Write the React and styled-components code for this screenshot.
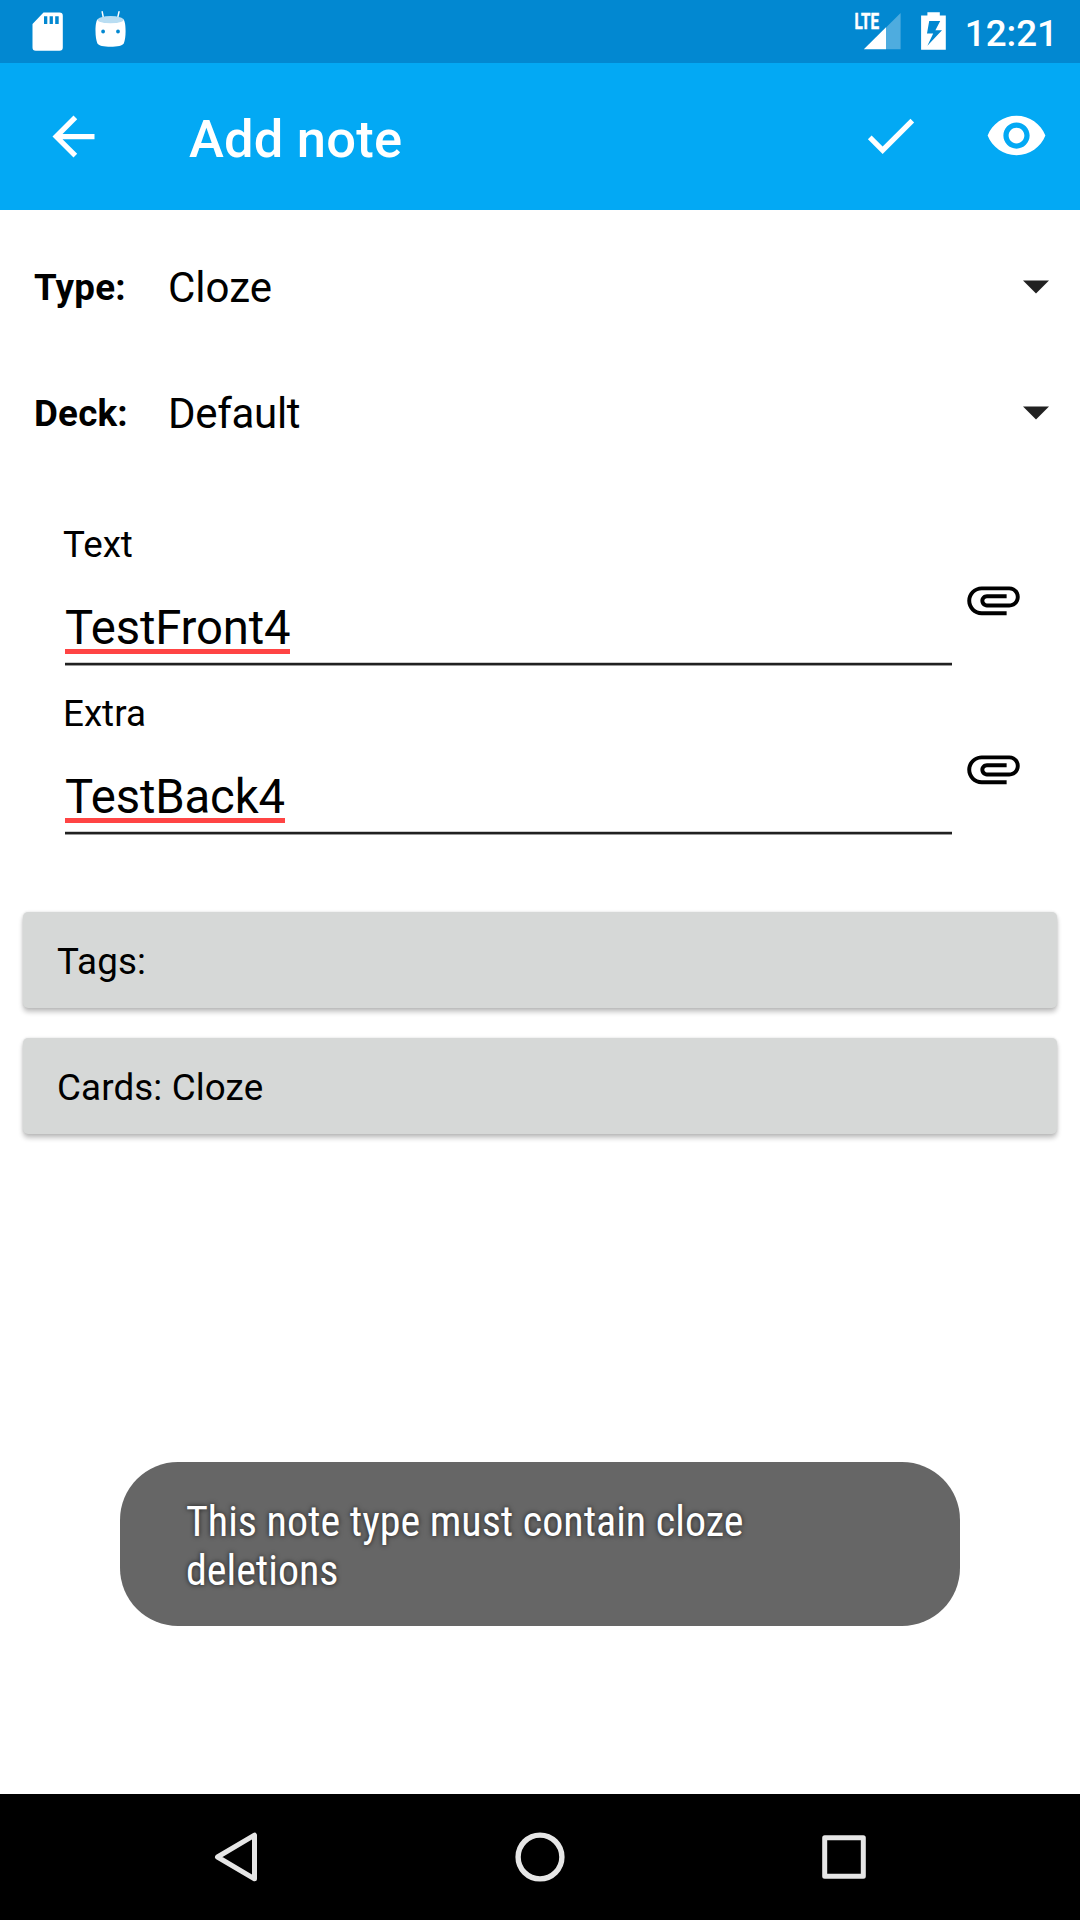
import React from 'react';
import styled, { createGlobalStyle } from 'styled-components';

const GlobalStyle = createGlobalStyle`
  *, *::before, *::after { box-sizing: border-box; }
  html, body { margin: 0; padding: 0; background: #fff; }
  body {
    font-family: Roboto, "Liberation Sans", sans-serif;
    color: #000;
    -webkit-font-smoothing: antialiased;
  }
  svg { display: block; flex: none; }
`;

const Screen = styled.div`
  width: 1080px;
  height: 1920px;
  display: flex;
  flex-direction: column;
  background: #fff;
  overflow: hidden;
`;

const StatusBar = styled.header`
  height: 63px;
  flex: none;
  display: flex;
  justify-content: space-between;
  background: #0288d1;
  color: #fff;
  padding: 0 22px 0 30px;
`;

const StatusGroup = styled.div`
  display: flex;
  align-items: flex-start;
  gap: ${({ $gap }) => $gap}px;
`;

const Clock = styled.time`
  font-size: 36.75px;
  font-weight: 500;
  line-height: 67px;
`;

const Toolbar = styled.div`
  height: 147px;
  flex: none;
  display: flex;
  align-items: center;
  background: #03a9f4;
  color: #fff;
  padding: 0 32px 0 42px;
`;

const Title = styled.h1`
  flex: 1;
  margin: 5px 0 0 84px;
  font-size: 52.5px;
  font-weight: 500;
  line-height: 62px;
  letter-spacing: 0.2px;
`;

const IconButton = styled.button`
  border: 0;
  padding: 0 0 ${({ $lift = 0 }) => $lift}px;
  margin: 0 0 0 ${({ $before = 0 }) => $before}px;
  background: none;
  color: inherit;
  display: flex;
`;

const Content = styled.main`
  flex: 1;
  min-height: 0;
  display: flex;
  flex-direction: column;
  padding-top: 14px;
`;

const SpinnerRow = styled.div`
  height: 126px;
  flex: none;
  display: flex;
  align-items: center;
  padding: 0 31.5px 0 34px;
`;

const SpinnerLabel = styled.span`
  width: 134px;
  padding-top: 1px;
  font-size: 36.75px;
  font-weight: 700;
  line-height: 43px;
  letter-spacing: 0.2px;
`;

const SpinnerValue = styled.span`
  flex: 1;
  padding-top: 1px;
  font-size: 42px;
  line-height: 49px;
  letter-spacing: ${({ $tracking = 0 }) => $tracking}px;
`;

const Fields = styled.section`
  flex: none;
  display: flex;
  flex-direction: column;
  padding: 46px 55px 0 63px;
`;

const Field = styled.div`
  height: 169px;
  display: flex;
  justify-content: space-between;
`;

const FieldBody = styled.div`
  width: 889px;
  display: flex;
  flex-direction: column;
`;

const FieldLabel = styled.label`
  font-size: 36.75px;
  line-height: 45px;
`;

const FieldValue = styled.div`
  height: 95px;
  margin-left: 2px;
  padding-top: 40px;
  display: flex;
  align-items: flex-start;
`;

const Misspelled = styled.span`
  font-size: 47.25px;
  line-height: 42px;
  letter-spacing: -0.15px;
  border-bottom: 5px solid #ff4444;
`;

const FieldLine = styled.div`
  height: 4px;
  margin-left: 2px;
  background: linear-gradient(#ccc 1px, #212121 1px, #212121 3px, #999 3px);
`;

const Attach = styled(IconButton)`
  align-self: flex-start;
  padding-top: 46px;
`;

const Actions = styled.section`
  flex: none;
  display: flex;
  flex-direction: column;
  gap: 30px;
  padding: 52px 23px 0;
`;

const ActionButton = styled.button`
  height: 96px;
  border: 0;
  border-radius: 5px;
  background: #d6d8d7;
  box-shadow: 0 4px 5px rgba(0, 0, 0, 0.24), 0 0 3px rgba(0, 0, 0, 0.12);
  color: #000;
  font: 400 36.75px/43px Roboto, "Liberation Sans", sans-serif;
  letter-spacing: 0.13px;
  text-align: left;
  padding: 3px 34px 0;
`;

const Toast = styled.div`
  width: 840px;
  height: 164px;
  flex: none;
  margin: auto auto 168px;
  border-radius: 58px;
  background: #666;
  color: #fff;
  padding: 35px 66px 0;
  font-family: "Roboto Condensed", Roboto, sans-serif;
  font-stretch: 75%;
  font-size: 42px;
  line-height: 49px;
  text-shadow: 0 0 5px rgba(0, 0, 0, 0.73);
`;

const NavBar = styled.nav`
  height: 126px;
  flex: none;
  display: flex;
  background: #000;
  color: #e6e6e6;
  padding: 0 84px;
`;

const NavButton = styled.button`
  flex: 1;
  border: 0;
  padding: 0;
  background: none;
  color: inherit;
  display: flex;
  align-items: center;
  justify-content: center;
`;

const MaterialIcon = ({ d, size = 63 }) => (
  <svg width={size} height={size} viewBox="0 0 24 24" fill="currentColor">
    <path d={d} />
  </svg>
);

const ICONS = {
  back: 'M20 11H7.83l5.59-5.59L12 4l-8 8 8 8 1.41-1.41L7.83 13H20v-2z',
  check: 'M9 16.2L4.8 12l-1.4 1.4L9 19 21 7l-1.4-1.4L9 16.2z',
  eye: 'M12 4.5C7 4.5 2.73 7.61 1 12c1.73 4.39 6 7.5 11 7.5s9.27-3.11 11-7.5c-1.73-4.39-6-7.5-11-7.5zM12 17c-2.76 0-5-2.24-5-5s2.24-5 5-5 5 2.24 5 5-2.24 5-5 5zm0-8c-1.66 0-3 1.34-3 3s1.34 3 3 3 3-1.34 3-3-1.34-3-3-3z',
  clip: 'M7.5 18C4.46 18 2 15.54 2 12.5S4.46 7 7.5 7H18c2.21 0 4 1.79 4 4s-1.79 4-4 4H9.5C8.12 15 7 13.88 7 12.5S8.12 10 9.5 10H17v1.5H9.5c-.55 0-1 .45-1 1s.45 1 1 1H18c1.38 0 2.5-1.12 2.5-2.5S19.38 8.5 18 8.5H7.5c-2.21 0-4 1.79-4 4s1.79 4 4 4H17V18H7.5z',
};

const SdCardIcon = () => (
  <svg width="36" height="63" viewBox="30 0 36 63">
    <path
      fill="#fff"
      fillRule="evenodd"
      d="M43.5 12.5H59.5a3.3 3.3 0 0 1 3.3 3.3V47.4a3.3 3.3 0 0 1-3.3 3.3H35.8a3.3 3.3 0 0 1-3.3-3.3V24zM44 16.3V24h3.3v-7.7zM49.6 16.3V24h3.3v-7.7zM55.2 16.3V24h3.5v-7.7z"
    />
  </svg>
);

const AndroidIcon = () => (
  <svg width="36" height="63" viewBox="93 0 36 63">
    <path d="M102.2 11.8l1.4 7M119 11.8l-1.6 7" stroke="#fff" strokeWidth="1.5" strokeLinecap="round" />
    <path
      fill="#fff"
      fillRule="evenodd"
      d="M97.6 19.3C100 24 121 24 123.4 19.3C125 21 125.6 26 125.6 31C125.6 36 125 40.5 123.9 43.2C123 45.6 117 46.7 110.6 46.7S98.2 45.6 97.3 43.2C96.2 40.5 95.5 36 95.5 31C95.5 26 96 21 97.6 19.3zM103.1 29.6a1.9 1.9 0 1 0 0 3.8a1.9 1.9 0 1 0 0-3.8zM118 29.6a1.9 1.9 0 1 0 0 3.8a1.9 1.9 0 1 0 0-3.8z"
    />
    <ellipse cx="110.6" cy="19.7" rx="13" ry="3.6" fill="#b9ddf2" />
  </svg>
);

const SignalIcon = () => (
  <svg width="50" height="63" viewBox="853 0 50 63">
    <path d="M886 27.5L900.6 13V49.3H886z" fill="#fff" fillOpacity="0.3" />
    <path d="M863.8 49.3L886 27.3V49.3z" fill="#fff" />
    <text
      x="854.5"
      y="29"
      fill="#fff"
      stroke="#fff"
      strokeWidth="0.5"
      fontFamily="Roboto, sans-serif"
      fontWeight="700"
      fontSize="21.5"
      textLength="24.5"
      lengthAdjust="spacingAndGlyphs"
    >
      LTE
    </text>
  </svg>
);

const BatteryIcon = () => (
  <svg width="29" height="63" viewBox="920 0 29 63">
    <path
      fill="#fff"
      fillRule="evenodd"
      d="M928.4 12.2h12.4v3.2h6V49.8h-24.7V15.4h6.3zM930.2 21l-2.2 12.6h6.2l-5.8 12.2L943 30.2h-6.6l4.8-9.2z"
    />
  </svg>
);

const CaretIcon = () => (
  <svg width="26" height="14" viewBox="0 0 26 14">
    <path d="M0 0.5H26L13 13.5z" fill="#212121" />
  </svg>
);

const NavIcon = ({ children }) => (
  <svg width="60" height="60" viewBox="0 0 60 60" fill="none" stroke="currentColor" strokeWidth="5" strokeLinejoin="round">
    {children}
  </svg>
);

const Spinner = ({ label, value, tracking }) => (
  <SpinnerRow>
    <SpinnerLabel>{label}</SpinnerLabel>
    <SpinnerValue $tracking={tracking}>{value}</SpinnerValue>
    <CaretIcon />
  </SpinnerRow>
);

const NoteField = ({ label, value }) => (
  <Field>
    <FieldBody>
      <FieldLabel>{label}</FieldLabel>
      <FieldValue>
        <Misspelled>{value}</Misspelled>
      </FieldValue>
      <FieldLine />
    </FieldBody>
    <Attach aria-label="Attach">
      <MaterialIcon d={ICONS.clip} />
    </Attach>
  </Field>
);

export default function App() {
  return (
    <>
      <GlobalStyle />
      <Screen>
        <StatusBar>
          <StatusGroup $gap={27}>
            <SdCardIcon />
            <AndroidIcon />
          </StatusGroup>
          <StatusGroup $gap={16.5}>
            <SignalIcon />
            <BatteryIcon />
            <Clock>12:21</Clock>
          </StatusGroup>
        </StatusBar>
        <Toolbar>
          <IconButton aria-label="Back">
            <MaterialIcon d={ICONS.back} />
          </IconButton>
          <Title>Add note</Title>
          <IconButton aria-label="Save" $lift={2}>
            <MaterialIcon d={ICONS.check} />
          </IconButton>
          <IconButton aria-label="Preview" $before={63} $lift={2}>
            <MaterialIcon d={ICONS.eye} />
          </IconButton>
        </Toolbar>
        <Content>
          <Spinner label="Type:" value="Cloze" />
          <Spinner label="Deck:" value="Default" tracking={-0.3} />
          <Fields>
            <NoteField label="Text" value="TestFront4" />
            <NoteField label="Extra" value="TestBack4" />
          </Fields>
          <Actions>
            <ActionButton>Tags:</ActionButton>
            <ActionButton>Cards: Cloze</ActionButton>
          </Actions>
          <Toast>This note type must contain cloze deletions</Toast>
        </Content>
        <NavBar>
          <NavButton aria-label="Back">
            <NavIcon>
              <path d="M48.5 8.2V51.8L11.5 30z" />
            </NavIcon>
          </NavButton>
          <NavButton aria-label="Home">
            <NavIcon>
              <circle cx="30" cy="30" r="21.9" strokeWidth="5.4" />
            </NavIcon>
          </NavButton>
          <NavButton aria-label="Recents">
            <NavIcon>
              <rect x="10.7" y="10.7" width="38.6" height="38.6" />
            </NavIcon>
          </NavButton>
        </NavBar>
      </Screen>
    </>
  );
}
